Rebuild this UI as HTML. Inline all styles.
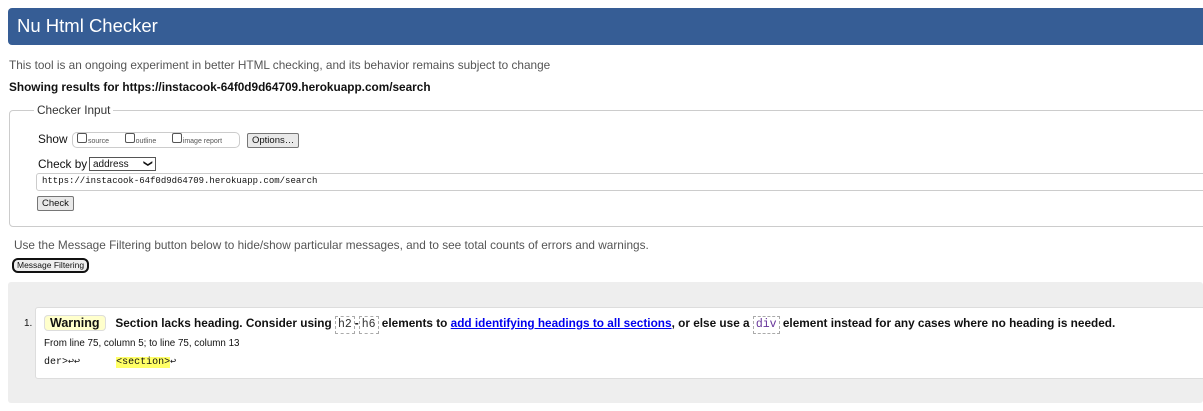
<!DOCTYPE html>
<html><head><meta charset="utf-8"><style>
body{margin:0;width:1203px;height:411px;overflow:hidden;background:#fff;font-family:"Liberation Sans",Arial,sans-serif;color:#111;position:relative}
.a{position:absolute;white-space:nowrap}
.mono{font-family:"Liberation Mono","DejaVu Sans Mono",monospace}
.cb{display:inline-block;width:8px;height:8px;border:1px solid #555;border-radius:2px;vertical-align:0px;margin-right:1px}
.btn{position:absolute;background:#e9e9e9;border:1px solid #767676;border-radius:2px;font-size:9.5px;line-height:13px;padding:0 4px}
.code{display:inline-block;border:1px dashed #aaa;padding:0 2px;font-family:"Liberation Mono",monospace;font-size:11.5px;font-weight:normal;line-height:16px;color:#333}
</style></head><body>
<div class="a" style="left:8px;top:8px;width:1195px;height:37px;background:#365d95;border-radius:4px 0 0 4px"></div>
<div class="a" style="left:17px;top:14px;font-size:18.5px;color:#fff;line-height:24px">Nu Html Checker</div>
<div class="a" style="left:9px;top:58px;font-size:11.8px;color:#555">This tool is an ongoing experiment in better HTML checking, and its behavior remains subject to change</div>
<div class="a" style="left:9px;top:80px;font-size:11.8px;font-weight:bold">Showing results for https://instacook-64f0d9d64709.herokuapp.com/search</div>
<div class="a" style="left:9px;top:110px;width:1200px;height:115px;border:1px solid #ccc;border-radius:4px"></div>
<div class="a" style="left:34px;top:103px;font-size:11.8px;color:#333;background:#fff;padding:0 3px">Checker Input</div>
<div class="a" style="left:38px;top:132px;font-size:11.8px">Show</div>
<div class="a" style="left:72px;top:132px;width:162px;height:14px;border:1px solid #ccc;border-radius:5px;font-size:7px;color:#555;line-height:14px;padding-left:4px"><span class="cb"></span>source &nbsp;&nbsp;&nbsp;&nbsp;&nbsp;&nbsp;&nbsp;<span class="cb"></span>outline &nbsp;&nbsp;&nbsp;&nbsp;&nbsp;&nbsp;&nbsp;<span class="cb"></span>image report</div>
<div class="btn" style="left:247px;top:133px">Options…</div>
<div class="a" style="left:38px;top:157px;font-size:11.8px">Check by</div>
<div class="a" style="left:89px;top:157px;width:62px;height:12px;border:1px solid #555;font-size:10px;line-height:13px;padding-left:3px">address<span style="position:absolute;right:3px;top:-1px;font-size:9px;transform:rotate(90deg)">❯</span></div>
<div class="a" style="left:36px;top:173px;width:1180px;height:16px;border:1px solid #ccc;border-radius:3px"></div>
<div class="a mono" style="left:42px;top:176px;font-size:9px">https://instacook-64f0d9d64709.herokuapp.com/search</div>
<div class="btn" style="left:37px;top:196px">Check</div>
<div class="a" style="left:14px;top:238px;font-size:11.8px;color:#555">Use the Message Filtering button below to hide/show particular messages, and to see total counts of errors and warnings.</div>
<div class="a" style="left:12px;top:258px;border:2px solid #111;border-radius:6px;font-size:8.5px;line-height:11px;padding:0 3px;background:#eee">Message Filtering</div>
<div class="a" style="left:8px;top:282px;width:1195px;height:121px;background:#eee;border-radius:3px"></div>
<div class="a" style="left:35px;top:307px;width:1170px;height:70px;background:#fff;border:1px solid #ddd;border-radius:3px"></div>
<div class="a" style="left:24px;top:318px;font-size:10px">1.</div>
<div class="a" style="left:44px;top:314px;font-size:11.8px;font-weight:bold;line-height:18px">
<span style="background:#ffffcc;border:1px solid #ddd;border-radius:4px;padding:0 5px;font-size:12.5px">Warning</span>&nbsp;&nbsp; Section lacks heading. Consider using <span class="code">h2</span>-<span class="code">h6</span> elements to <span style="color:#00e;text-decoration:underline">add identifying headings to all sections</span>, or else use a <span class="code" style="color:#639">div</span> element instead for any cases where no heading is needed.</div>
<div class="a" style="left:44px;top:338px;font-size:9.8px">From line 75, column 5; to line 75, column 13</div>
<div class="a mono" style="left:44px;top:356px;font-size:10px">der&gt;↩↩ &nbsp;&nbsp;&nbsp;&nbsp;&nbsp;<span style="background:#ffff66">&lt;section&gt;</span>↩</div>
</body></html>
